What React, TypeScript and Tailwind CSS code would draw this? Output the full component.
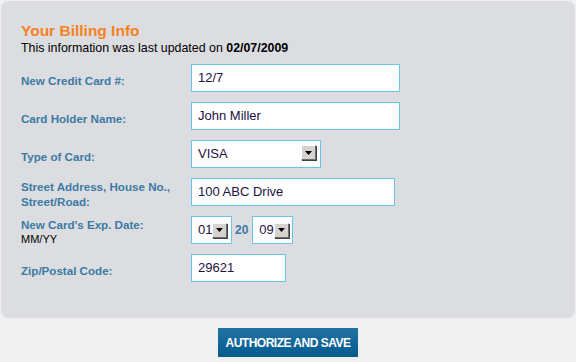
import React from "react";

const labelCls = "text-[11.6px] leading-[15px] font-bold text-[#3b7aa5]";
const inputCls =
  "h-[28px] border border-[#6cc4ea] bg-white pl-[6px] flex items-center text-[13px] text-[#24103f]";

function Arrow() {
  return (
    <span className="flex h-[15px] w-[15px] items-center justify-center border border-t-white border-l-white border-r-[#6e6e6e] border-b-[#6e6e6e] bg-[#d6d3ce] shadow-[1px_1px_0_#404040]">
      <svg width="7" height="4" viewBox="0 0 7 4">
        <path d="M0 0h7L3.5 4z" fill="#000" />
      </svg>
    </span>
  );
}

function Row({ label, children }: { label: React.ReactNode; children: React.ReactNode }) {
  return (
    <div className="flex items-center h-[28px] mt-[10px]">
      <div className="w-[170px] pt-[4px]">{label}</div>
      {children}
    </div>
  );
}

export default function App() {
  return (
    <div
      className="w-[576px] h-[362px] bg-[#f0f0f0] overflow-hidden"
      style={{ fontFamily: '"Liberation Sans", Arial, sans-serif' }}
    >
      <div className="ml-[1px] mt-[1px] w-[574px] h-[317px] rounded-[8px] bg-[#dcdde0] pl-[20px] pt-[20px]">
        <h1 className="text-[15.5px] leading-[20px] font-bold text-[#f5821f]">Your Billing Info</h1>
        <p className="text-[12.4px] leading-[14px] text-black">
          This information was last updated on <b>02/07/2009</b>
        </p>
        <div className="mt-[-1px]">
          <Row label={<span className={labelCls}>New Credit Card #:</span>}>
            <div className={`${inputCls} w-[209px]`}>12/7</div>
          </Row>
          <Row label={<span className={labelCls}>Card Holder Name:</span>}>
            <div className={`${inputCls} w-[209px]`}>John Miller</div>
          </Row>
          <Row label={<span className={labelCls}>Type of Card:</span>}>
            <div className={`${inputCls} w-[130px] justify-between pr-[4px]`}>
              <span>VISA</span>
              <span className="mb-[3px]">
                <Arrow />
              </span>
            </div>
          </Row>
          <Row
            label={
              <div className={labelCls}>
                Street Address, House No.,
                <br />
                Street/Road:
              </div>
            }
          >
            <div className={`${inputCls} w-[204px]`}>100 ABC Drive</div>
          </Row>
          <Row
            label={
              <div className="leading-[15px]">
                <div className={labelCls}>New Card's Exp. Date:</div>
                <div className="text-[11px] text-black">MM/YY</div>
              </div>
            }
          >
            <div className="flex items-center">
              <div className={`${inputCls} w-[41px]`}>
                <span>01</span>
                <Arrow />
              </div>
              <span className="ml-[3px] mr-[4px] text-[12px] font-bold text-[#3b7aa5]">20</span>
              <div className={`${inputCls} w-[41px]`}>
                <span>09</span>
                <Arrow />
              </div>
            </div>
          </Row>
          <Row label={<span className={labelCls}>Zip/Postal Code:</span>}>
            <div className={`${inputCls} w-[95px]`}>29621</div>
          </Row>
        </div>
      </div>
      <div className="flex justify-center mt-[10px]">
        <button className="h-[29px] w-[140px] bg-gradient-to-b from-[#2373a1] via-[#11679a] to-[#055b8c] text-white text-[12px] font-bold tracking-[-0.5px]">
          AUTHORIZE AND SAVE
        </button>
      </div>
    </div>
  );
}
